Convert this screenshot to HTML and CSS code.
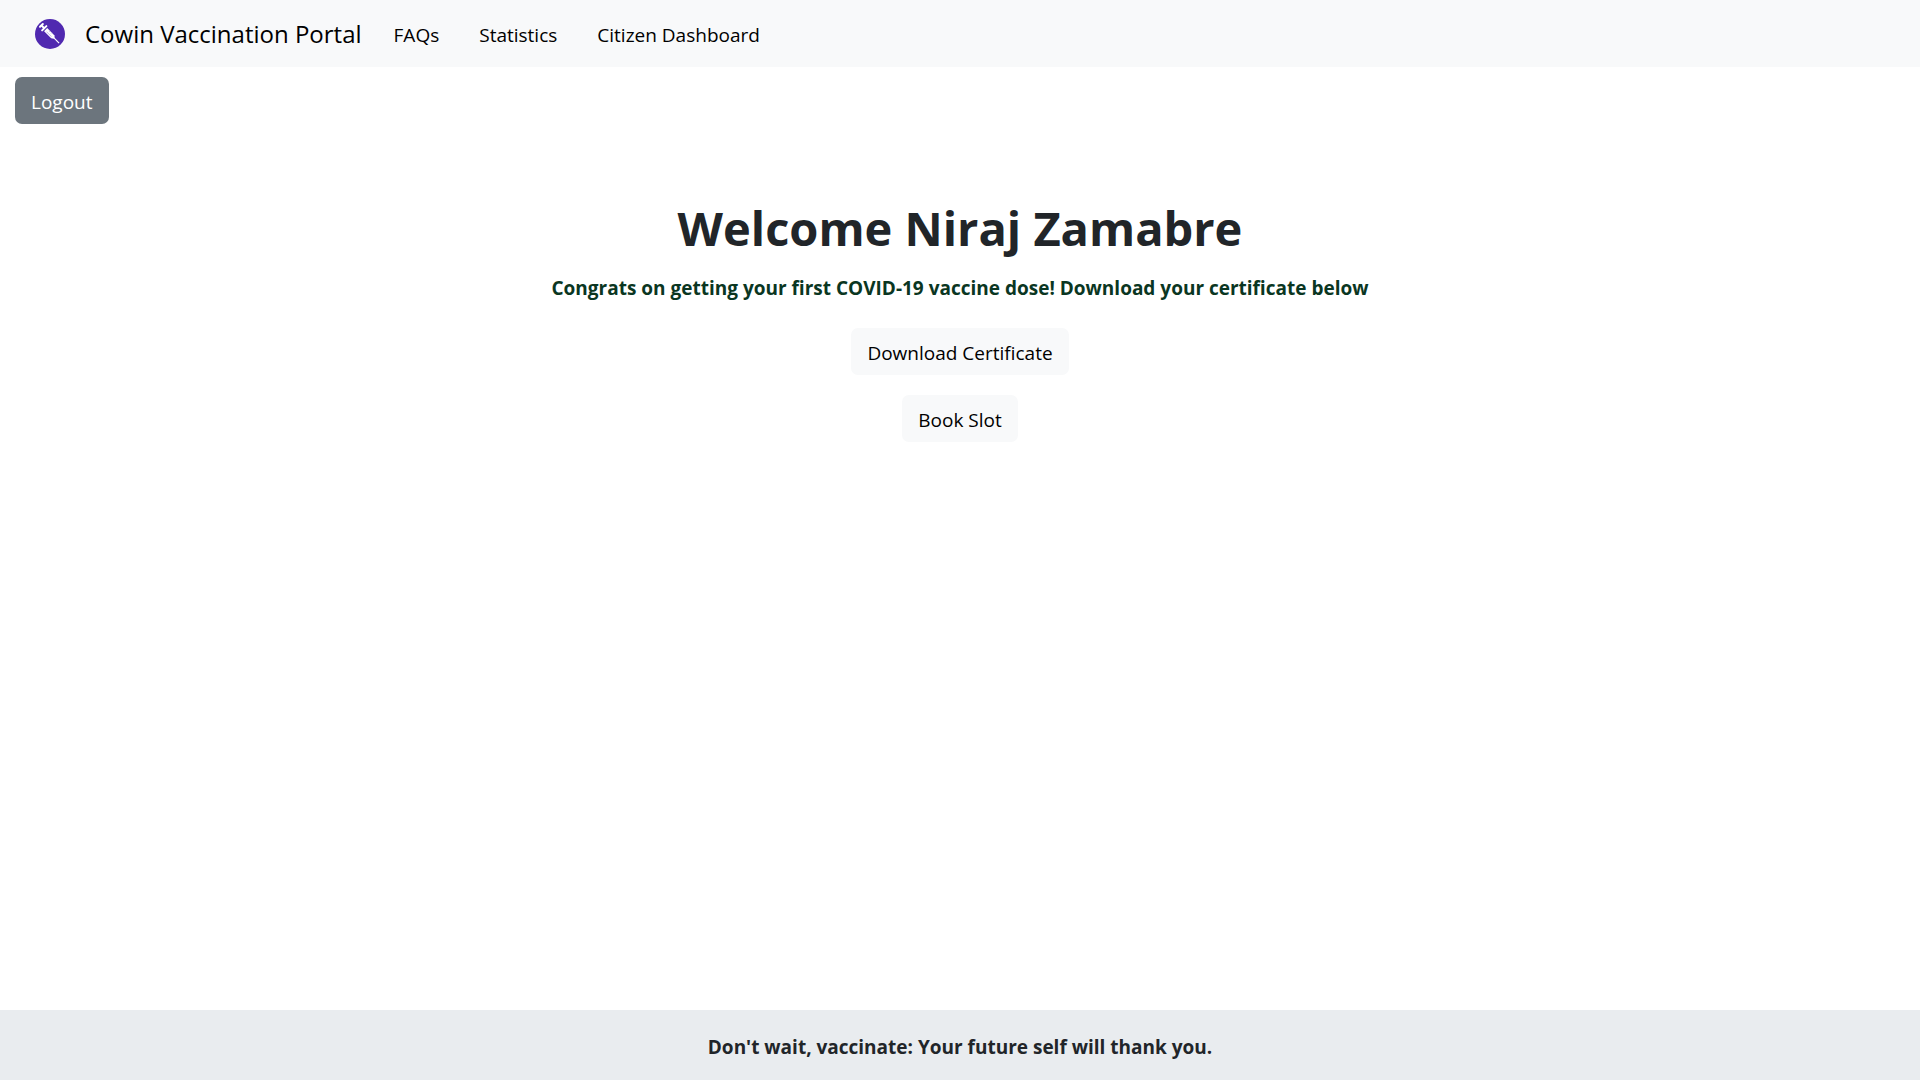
FILE: index.html
```html
<!DOCTYPE html>
<html lang="en">
<head>
  <meta charset="utf-8">
  <meta name="viewport" content="width=device-width, initial-scale=1">
  <title>Cowin Vaccination Portal</title>
  <link rel="stylesheet" href="styles.css">
</head>
<body>
  <nav class="navbar">
    <a class="brand" href="#">
      <svg class="logo" viewBox="0 0 30 30" aria-hidden="true">
        <circle cx="15" cy="15" r="15" fill="#5029b0"/>
        <g transform="translate(5 5) rotate(45)" fill="#fff">
          <rect x="1" y="-3" width="2" height="6" rx="1"/>
          <rect x="2" y="-1" width="4" height="2"/>
          <rect x="5" y="-4" width="2" height="8" rx="1"/>
          <path d="M8 -2.200H18L20 -.8V.8L18 2.200H8Z"/>
          <rect x="19" y="-.6" width="8" height="1.200"/>
          <path d="M10 .8H17M12 -2.200V-1M14.500 -2.200V-1" stroke="#a993dc" stroke-width=".6"/>
        </g>
      </svg>
      <span>Cowin Vaccination Portal</span>
    </a>
    <a class="nav-link" href="#">FAQs</a>
    <a class="nav-link" href="#">Statistics</a>
    <a class="nav-link" href="#">Citizen Dashboard</a>
  </nav>
  <div class="toolbar">
    <button class="btn btn-secondary" type="button">Logout</button>
  </div>
  <main class="content">
    <h1 class="title">Welcome Niraj Zamabre</h1>
    <p class="message">Congrats on getting your first COVID-19 vaccine dose! Download your certificate below</p>
    <button class="btn btn-light" type="button">Download Certificate</button>
    <button class="btn btn-light" type="button">Book Slot</button>
  </main>
  <footer class="footer">Don't wait, vaccinate: Your future self will thank you.</footer>
</body>
</html>
```
FILE: styles.css
```css
* {
  box-sizing: border-box;
}

body {
  display: flex;
  flex-direction: column;
  min-height: 100vh;
  margin: 0;
  background: #fff;
  color: #212529;
  font-family: "Open Sans", "Noto Sans", sans-serif;
  font-size: 19px;
  line-height: 30px;
}

.navbar {
  display: flex;
  align-items: center;
  padding: 14px 35px;
  background: #f8f9fa;
}

.brand {
  display: flex;
  align-items: center;
  gap: 20px;
  margin-right: 12px;
  color: #000;
  font-size: 24px;
  line-height: 39px;
  text-decoration: none;
}

.logo {
  width: 30px;
  height: 30px;
}

.nav-link {
  padding: 5px 20px 3px;
  color: #000;
  text-decoration: none;
}

.toolbar {
  padding: 10px 15px;
}

.btn {
  display: block;
  padding: 10px 16px 7px;
  border: 0;
  border-radius: 7px;
  font: inherit;
  cursor: pointer;
}

.btn-secondary {
  background: #6c757d;
  color: #fff;
}

.btn-light {
  background: #f8f9fa;
  color: #000;
}

.content {
  display: flex;
  flex: 1;
  flex-direction: column;
  align-items: center;
  gap: 20px;
  padding: 63px 15px 20px;
  text-align: center;
}

.title {
  margin: 0 0 -6px;
  font-size: 47px;
  font-weight: 700;
  line-height: 62px;
}

.message {
  margin: 0 0 5px;
  color: #0a3622;
  font-weight: 700;
}

.footer {
  padding: 22px 20px 18px;
  background: #e9ecef;
  font-weight: 700;
  text-align: center;
}
```
